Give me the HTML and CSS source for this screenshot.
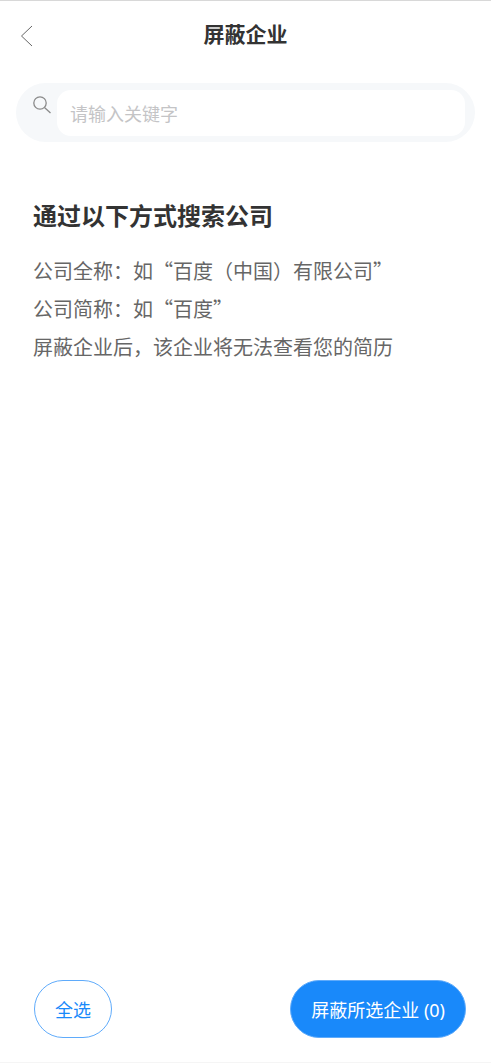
FILE: index.html
```html
<!DOCTYPE html>
<html lang="zh-CN">
<head>
<meta charset="utf-8">
<meta name="viewport" content="width=device-width, initial-scale=1">
<title>屏蔽企业</title>
<link rel="stylesheet" href="styles.css">
</head>
<body>
<div class="page">
  <header class="header">
    <button class="back" type="button" aria-label="返回">
      <svg width="14" height="22" viewBox="0 0 14 22" fill="none" stroke="#666" stroke-width="1"><path d="M12 1 1.5 11 12 21"/></svg>
    </button>
    <h1 class="header-title">屏蔽企业</h1>
  </header>
  <form class="search">
    <label class="search-label" for="keyword" aria-label="搜索">
      <svg width="18" height="18" viewBox="0 0 18 18" fill="none" stroke="#8a8a8a" stroke-width="1.3"><circle cx="7" cy="7" r="6.2"/><path d="m11.5 11.5 6 5.5"/></svg>
    </label>
    <input class="search-input" id="keyword" type="text" placeholder="请输入关键字">
  </form>
  <main class="tips">
    <h2 class="tips-title">通过以下方式搜索公司</h2>
    <p class="tip">公司全称：如“百度（中国）有限公司”</p>
    <p class="tip">公司简称：如“百度”</p>
    <p class="tip">屏蔽企业后，该企业将无法查看您的简历</p>
  </main>
  <footer class="footer">
    <button class="btn" type="button">全选</button>
    <button class="btn btn-primary" type="button">屏蔽所选企业 (0)</button>
  </footer>
</div>
</body>
</html>
```
FILE: styles.css
```css
* {
  box-sizing: border-box;
}

body {
  margin: 0;
  background: #fff;
  color: #333;
  font-family: "Noto Sans CJK SC", sans-serif;
}

.page {
  display: flex;
  flex-direction: column;
  min-height: 100vh;
  border-top: 1px solid #d8d8d8;
  border-bottom: 1px solid #f5f5f5;
}

.header {
  display: grid;
  grid-template-columns: 32px 1fr 32px;
  align-items: center;
  height: 66px;
  padding: 0 16px;
}

.back {
  display: flex;
  padding: 6px 4px 2px;
  border: 0;
  background: none;
}

.header-title {
  margin: 0;
  padding-bottom: 2px;
  font-size: 21px;
  line-height: 32px;
  text-align: center;
}

.search {
  display: flex;
  margin: 16px 16px 0;
  padding: 7px 10px 6px 17px;
  border-radius: 30px;
  background: #f6f8fa;
}

.search-label {
  display: flex;
  flex: none;
  width: 24px;
  padding-top: 6px;
}

.search-input {
  flex: 1;
  min-width: 0;
  height: 46px;
  padding: 0 13px;
  border: 0;
  border-radius: 14px;
  outline: 0;
  background: #fff;
  font: 18px "Noto Sans CJK SC", sans-serif;
}

.search-input::placeholder {
  color: #c4c4c6;
}

.tips {
  flex: 1;
  padding: 54px 33px 0;
}

.tips-title {
  margin: 0 0 18px;
  font-size: 24px;
  line-height: 38px;
}

.tip {
  margin: 0;
  color: #666;
  font-size: 20px;
  line-height: 38px;
}

.footer {
  display: flex;
  justify-content: space-between;
  padding: 24px 25px 24px 34px;
}

.btn {
  height: 58px;
  padding: 0 20px;
  border: 1px solid #5fabfb;
  border-radius: 29px;
  background: #fff;
  color: #1989fa;
  font: 18px "Noto Sans", "Noto Sans CJK SC", sans-serif;
}

.btn-primary {
  background: #1989fa;
  color: #fff;
}
```
